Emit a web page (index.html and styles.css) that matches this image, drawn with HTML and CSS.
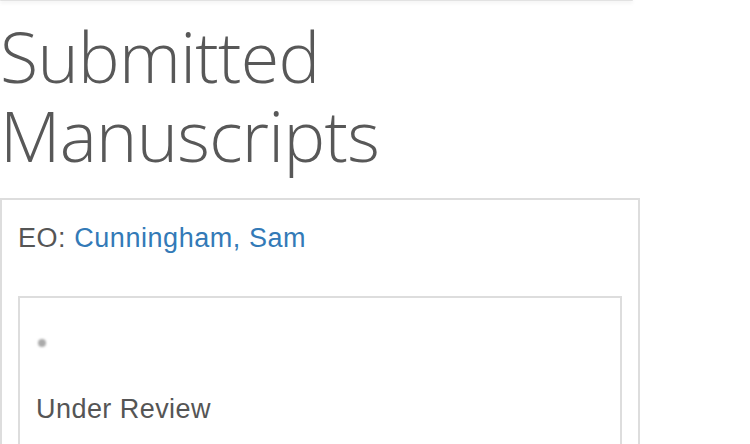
FILE: index.html
```html
<!DOCTYPE html>
<html>
<head>
<meta charset="utf-8">
<link rel="stylesheet" href="styles.css">
</head>
<body>
<div class="topbar"></div>
<h1 class="title">Submitted Manuscripts</h1>
<div class="panel">
  <p class="eo">EO: <a href="#" class="link">Cunningham, Sam</a></p>
  <div class="card">
    <ul class="bullets"><li></li></ul>
    <p class="status">Under Review</p>
  </div>
</div>
</body>
</html>
```
FILE: styles.css
```css
html, body {
  margin: 0;
  padding: 0;
  background: #fff;
  overflow: hidden;
}
body {
  font-family: "Liberation Sans", Arial, sans-serif;
  color: #555;
}
.topbar {
  width: 633px;
  height: 1px;
  background: #e2e2e2;
  box-shadow: 0 1px 4px rgba(0,0,0,0.18);
  border-radius: 0 0 3px 3px;
}
.title {
  margin: 16px 0 0 0;
  width: 440px;
  font-family: "Open Sans", sans-serif;
  font-weight: 300;
  font-stretch: 92%;
  font-size: 70px;
  line-height: 79px;
  color: #585858;
  letter-spacing: -0.7px;
}
.panel {
  margin-top: 23px;
  border: 2px solid #ddd;
  padding: 0 16px 0 16px;
  box-sizing: border-box;
  width: 640px;
}
.eo {
  margin: 22px 0 0 0;
  font-size: 27px;
  letter-spacing: 0.55px;
  line-height: 32px;
}
.link {
  color: #337ab7;
  text-decoration: none;
}
.card {
  margin-top: 42px;
  border: 2px solid #ddd;
  padding: 0 16px;
  height: 160px;
}
.bullets {
  margin: 41px 0 0 0;
  padding: 0;
  list-style: none;
  height: 28px;
}
.bullets li::before {
  content: "";
  display: block;
  width: 8px;
  height: 8px;
  margin-left: 2px;
  border-radius: 50%;
  background: #aaa;
  filter: blur(0.8px);
}
.status {
  margin: 26px 0 0 0;
  font-size: 27px;
  letter-spacing: 0.45px;
  line-height: 32px;
}
```
